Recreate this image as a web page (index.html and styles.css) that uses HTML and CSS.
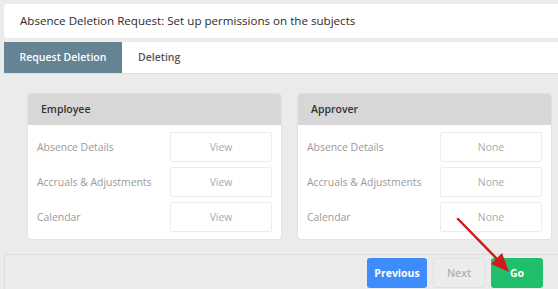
FILE: index.html
```html
<!DOCTYPE html>
<html>
<head>
<meta charset="utf-8">
<link rel="stylesheet" href="styles.css">
</head>
<body>
<div class="page">
  <div class="title">Absence Deletion Request: Set up permissions on the subjects</div>
  <div class="tabs">
    <div class="tab active">Request Deletion</div>
    <div class="tab">Deleting</div>
  </div>
  <div class="panels">
    <div class="panel">
      <div class="panel-head">Employee</div>
      <div class="panel-body">
        <div class="row"><span class="label">Absence Details</span><span class="box">View</span></div>
        <div class="row"><span class="label">Accruals &amp; Adjustments</span><span class="box">View</span></div>
        <div class="row"><span class="label">Calendar</span><span class="box">View</span></div>
      </div>
    </div>
    <div class="panel">
      <div class="panel-head">Approver</div>
      <div class="panel-body">
        <div class="row"><span class="label">Absence Details</span><span class="box">None</span></div>
        <div class="row"><span class="label">Accruals &amp; Adjustments</span><span class="box">None</span></div>
        <div class="row"><span class="label">Calendar</span><span class="box">None</span></div>
      </div>
    </div>
  </div>
  <div class="footer">
    <button class="btn btn-prev">Previous</button>
    <button class="btn btn-next">Next</button>
    <button class="btn btn-go">Go</button>
  </div>
</div>
<svg class="arrow" width="558" height="289" viewBox="0 0 558 289">
  <line x1="458" y1="219" x2="500" y2="262" stroke="#d11a1a" stroke-width="2.5" stroke-linecap="round"/>
  <polygon points="509,272 491,264 502,253" fill="#d11a1a"/>
</svg>
</body>
</html>
```
FILE: styles.css
```css
html, body {
  margin: 0;
  padding: 0;
}
body {
  background: #ebebeb;
  font-family: "Open Sans", "Noto Sans", sans-serif;
  width: 558px;
  height: 289px;
  overflow: hidden;
  position: relative;
}
.page {
  padding: 4px 0 0 4px;
}
.title {
  height: 34px;
  line-height: 34px;
  background: #fff;
  border-radius: 4px 0 0 4px;
  padding-left: 16px;
  font-size: 11.6px;
  color: #2b2b2b;
}
.tabs {
  margin-top: 4px;
  height: 31px;
  background: #fff;
  display: flex;
  box-shadow: 0 1px 1px rgba(0,0,0,0.06);
}
.tab {
  line-height: 31px;
  font-size: 10.5px;
  font-weight: 600;
  color: #555;
  padding: 0 16px;
}
.tab.active {
  width: 118px;
  box-sizing: border-box;
  padding: 0;
  text-align: center;
  background: #668393;
  color: #fff;
}
.panels {
  display: flex;
  gap: 17px;
  margin-top: 21px;
  padding-left: 24px;
}
.panel {
  width: 253px;
  background: #fff;
  border-radius: 3px;
  overflow: hidden;
  box-shadow: 0 0 0 1px #e2e2e2;
}
.panel-head {
  height: 31px;
  line-height: 31px;
  background: #d7d7d7;
  padding-left: 13px;
  font-size: 10.5px;
  font-weight: 600;
  color: #333;
}
.panel-body {
  padding: 7px 9px 7px 9px;
  display: flex;
  flex-direction: column;
  gap: 5px;
}
.row {
  display: flex;
  justify-content: space-between;
  align-items: center;
}
.label {
  font-size: 10.4px;
  color: #9a9a9a;
}
.box {
  width: 102px;
  height: 30px;
  box-sizing: border-box;
  border: 1px solid #ececec;
  border-radius: 2px;
  display: flex;
  align-items: center;
  justify-content: center;
  font-size: 10.4px;
  color: #aaa;
}
.footer {
  margin-top: 15px;
  height: 40px;
  border-top: 1px solid #dcdcdc;
  border-left: 1px solid #dcdcdc;
  display: flex;
  justify-content: flex-end;
  align-items: flex-start;
  padding: 3px 15px 0 0;
  gap: 6px;
  box-sizing: border-box;
}
.btn {
  height: 30px;
  border-radius: 3px;
  font-family: "Open Sans", "Noto Sans", sans-serif;
  font-size: 10.5px;
  font-weight: 700;
  border: 1px solid transparent;
  padding: 0;
}
.btn-prev {
  width: 60px;
  background: #3e8bfb;
  color: #fff;
}
.btn-next {
  width: 52px;
  background: #ececec;
  border-color: #e0e0e0;
  color: #b0b0b0;
  font-weight: 600;
}
.btn-go {
  width: 52px;
  background: #20bf6b;
  color: #fff;
}
.arrow {
  position: absolute;
  left: 0;
  top: 0;
  pointer-events: none;
}
```
